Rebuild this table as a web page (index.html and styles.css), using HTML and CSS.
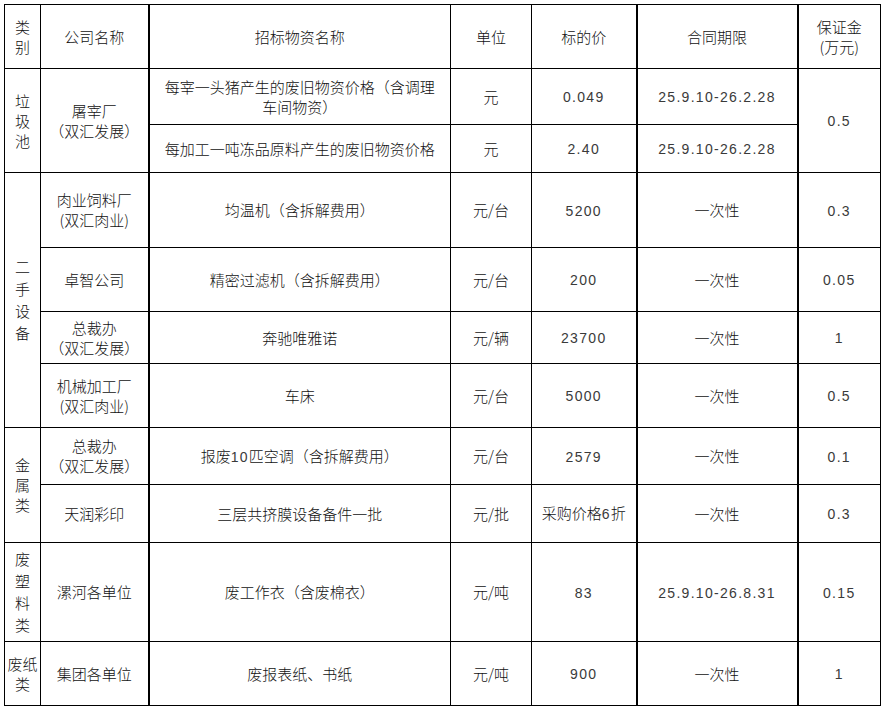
FILE: index.html
```html
<!DOCTYPE html>
<html lang="zh">
<head>
<meta charset="utf-8">
<link rel="stylesheet" href="styles.css">
</head>
<body>
<table class="bid">
  <colgroup>
    <col class="c1"><col class="c2"><col class="c3"><col class="c4"><col class="c5"><col class="c6"><col class="c7">
  </colgroup>
  <tr class="h64">
    <td class="cat">类<br>别</td>
    <td>公司名称</td>
    <td class="thick">招标物资名称</td>
    <td>单位</td>
    <td>标的价</td>
    <td class="thick">合同期限</td>
    <td class="thick">保证金<br>(万元)</td>
  </tr>
  <tr class="h56">
    <td class="cat" rowspan="2">垃<br>圾<br>池</td>
    <td rowspan="2">屠宰厂<br>（双汇发展）</td>
    <td class="thick">每宰一头猪产生的废旧物资价格（含调理<br>车间物资）</td>
    <td>元</td>
    <td><span class="n">0.049</span></td>
    <td class="thick"><span class="n">25.9.10-26.2.28</span></td>
    <td class="thick" rowspan="2"><span class="n">0.5</span></td>
  </tr>
  <tr class="h48">
    <td class="thick">每加工一吨冻品原料产生的废旧物资价格</td>
    <td>元</td>
    <td><span class="n">2.40</span></td>
    <td class="thick"><span class="n">25.9.10-26.2.28</span></td>
  </tr>
  <tr class="h75">
    <td class="cat tall" rowspan="4">二<br>手<br>设<br>备</td>
    <td>肉业饲料厂<br>(双汇肉业)</td>
    <td class="thick">均温机（含拆解费用）</td>
    <td>元/台</td>
    <td><span class="n">5200</span></td>
    <td class="thick">一次性</td>
    <td class="thick"><span class="n">0.3</span></td>
  </tr>
  <tr class="h64">
    <td>卓智公司</td>
    <td class="thick">精密过滤机（含拆解费用）</td>
    <td>元/台</td>
    <td><span class="n">200</span></td>
    <td class="thick">一次性</td>
    <td class="thick"><span class="n">0.05</span></td>
  </tr>
  <tr class="h52">
    <td>总裁办<br>（双汇发展）</td>
    <td class="thick">奔驰唯雅诺</td>
    <td>元/辆</td>
    <td><span class="n">23700</span></td>
    <td class="thick">一次性</td>
    <td class="thick"><span class="n">1</span></td>
  </tr>
  <tr class="h64">
    <td>机械加工厂<br>(双汇肉业)</td>
    <td class="thick">车床</td>
    <td>元/台</td>
    <td><span class="n">5000</span></td>
    <td class="thick">一次性</td>
    <td class="thick"><span class="n">0.5</span></td>
  </tr>
  <tr class="h57">
    <td class="cat" rowspan="2">金<br>属<br>类</td>
    <td>总裁办<br>（双汇发展）</td>
    <td class="thick">报废<span class="n">10</span>匹空调（含拆解费用）</td>
    <td>元/台</td>
    <td><span class="n">2579</span></td>
    <td class="thick">一次性</td>
    <td class="thick"><span class="n">0.1</span></td>
  </tr>
  <tr class="h58">
    <td>天润彩印</td>
    <td class="thick">三层共挤膜设备备件一批</td>
    <td>元/批</td>
    <td>采购价格<span class="n">6</span>折</td>
    <td class="thick">一次性</td>
    <td class="thick"><span class="n">0.3</span></td>
  </tr>
  <tr class="h99">
    <td class="cat tall">废<br>塑<br>料<br>类</td>
    <td>漯河各单位</td>
    <td class="thick">废工作衣（含废棉衣）</td>
    <td>元/吨</td>
    <td><span class="n">83</span></td>
    <td class="thick"><span class="n">25.9.10-26.8.31</span></td>
    <td class="thick"><span class="n">0.15</span></td>
  </tr>
  <tr class="h64">
    <td class="cat">废纸<br>类</td>
    <td>集团各单位</td>
    <td class="thick">废报表纸、书纸</td>
    <td>元/吨</td>
    <td><span class="n">900</span></td>
    <td class="thick">一次性</td>
    <td class="thick"><span class="n">1</span></td>
  </tr>
</table>
</body>
</html>
```

FILE: styles.css
```css
html, body {
  margin: 0;
  padding: 0;
  background: #fff;
}

body {
  padding: 4px 0 0 4px;
  font-family: "Noto Sans CJK SC", "Noto Sans", sans-serif;
  font-weight: 300;
  font-size: 15px;
  line-height: 20px;
  color: #111;
}

.bid {
  border-collapse: collapse;
  table-layout: fixed;
  width: 876px;
}

.c1 { width: 36px; }
.c2 { width: 108px; }
.c3 { width: 302px; }
.c4 { width: 81px; }
.c5 { width: 105px; }
.c6 { width: 161px; }
.c7 { width: 83px; }

.bid td {
  border: 1px solid #000;
  text-align: center;
  vertical-align: middle;
  padding: 0 3px;
  white-space: nowrap;
}

.bid td.thick {
  border-left: 2px solid #000;
}

.bid td.cat {
  padding: 0;
  line-height: 20px;
}

.bid td.tall {
  line-height: 22px;
}

.n {
  font-family: "Liberation Sans", Arial, sans-serif;
  font-size: 14px;
  font-weight: 400;
  letter-spacing: 1.3px;
  color: #3a3a3a;
}

.h48 { height: 48px; }
.h52 { height: 52px; }
.h56 { height: 56px; }
.h57 { height: 57px; }
.h58 { height: 58px; }
.h64 { height: 64px; }
.h75 { height: 75px; }
.h99 { height: 99px; }
```
